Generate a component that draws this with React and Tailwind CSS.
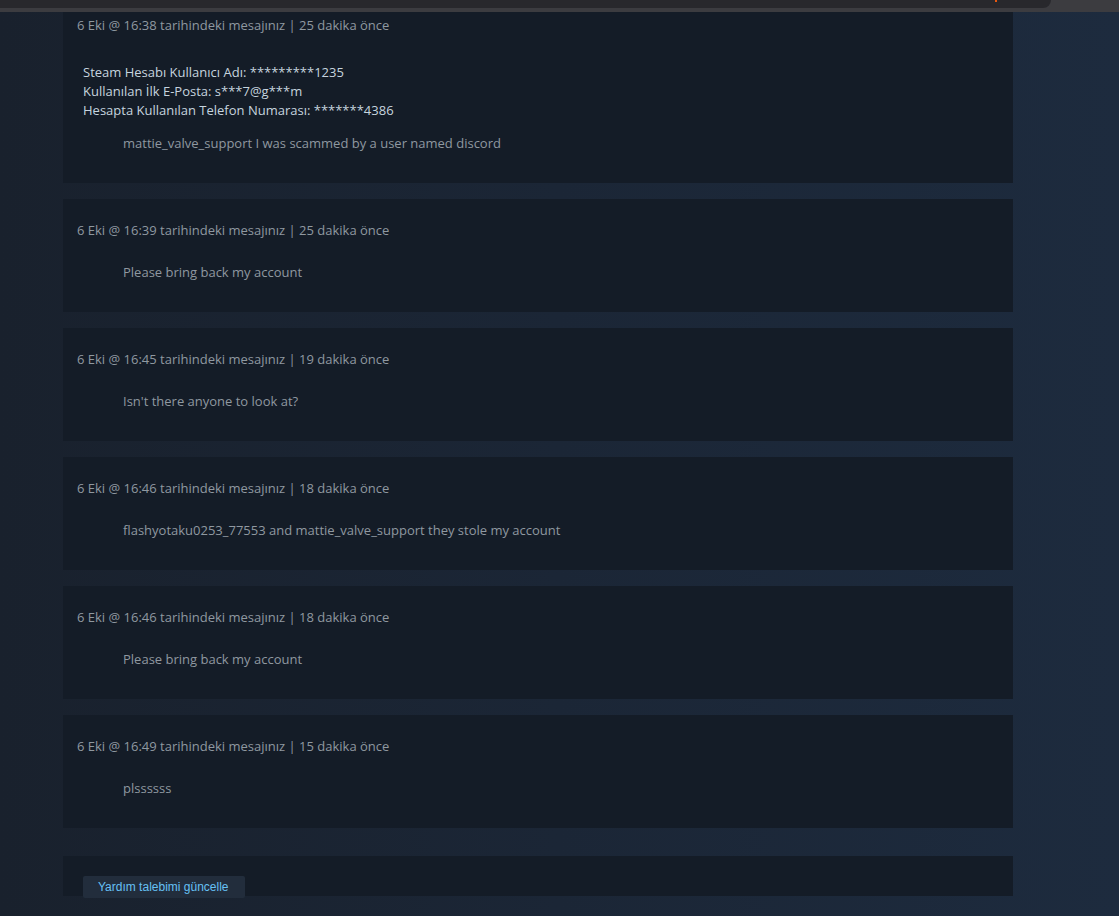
import React from "react";

const messages = [
  { time: "16:39", ago: "25", text: "Please bring back my account" },
  { time: "16:45", ago: "19", text: "Isn't there anyone to look at?" },
  {
    time: "16:46",
    ago: "18",
    text: "flashyotaku0253_77553 and mattie_valve_support they stole my account",
  },
  { time: "16:46", ago: "18", text: "Please bring back my account" },
  { time: "16:49", ago: "15", text: "plssssss" },
];

const Header = ({ time, ago }) => (
  <div className="pl-[14px] text-[13px] leading-[18px] text-[#8f98a0]">
    6 Eki @ {time} tarihindeki mesajınız | {ago} dakika önce
  </div>
);

const App = () => {
  return (
    <div
      className="h-[916px] overflow-hidden bg-gradient-to-r from-[#19212d] via-[#1b2636] to-[#1d2b3e]"
      style={{ fontFamily: '"Open Sans", "Noto Sans", sans-serif' }}
    >
      <div className="flex h-[8px] bg-[#3c3c40]">
        <div className="relative w-[1051px] rounded-br-[8px] bg-[#28282c]">
          <div className="absolute left-[995px] top-0 h-[2px] w-[2px] bg-[#e8570f]" />
        </div>
      </div>
      <div className="h-[4px] bg-[#3c3c40]" />

      <div className="ml-[63px] flex w-[950px] flex-col gap-[16px]">
        <div className="bg-[#141c27] pt-[4px] pb-[31px]">
          <Header time="16:38" ago="25" />
          <div className="mt-[29px] pl-[20px] text-[13px] leading-[19px] text-[#c6d4df]">
            <div>Steam Hesabı Kullanıcı Adı: *********1235</div>
            <div>Kullanılan İlk E-Posta: s***7@g***m</div>
            <div>Hesapta Kullanılan Telefon Numarası: *******4386</div>
          </div>
          <div className="mt-[14px] pl-[60px] text-[13px] leading-[18px] text-[#8f98a0]">
            mattie_valve_support I was scammed by a user named discord
          </div>
        </div>

        {messages.map((m, i) => (
          <div key={i} className="h-[113px] bg-[#141c27] pt-[22px]">
            <Header time={m.time} ago={m.ago} />
            <div className="mt-[24px] pl-[60px] text-[13px] leading-[18px] text-[#8f98a0]">
              {m.text}
            </div>
          </div>
        ))}

        <div className="mt-[12px] h-[40px] bg-[#141c27] pl-[20px] pt-[20px]">
          <button
            className="h-[22px] w-[162px] rounded-[2px] bg-[#222d3c] text-left pl-[15px] text-[12px] leading-[22px] text-[#66c0f4] align-top"
            style={{ fontFamily: '"Liberation Sans", Arial, sans-serif' }}
          >
            Yardım talebimi güncelle
          </button>
        </div>
      </div>
    </div>
  );
};

export default App;
